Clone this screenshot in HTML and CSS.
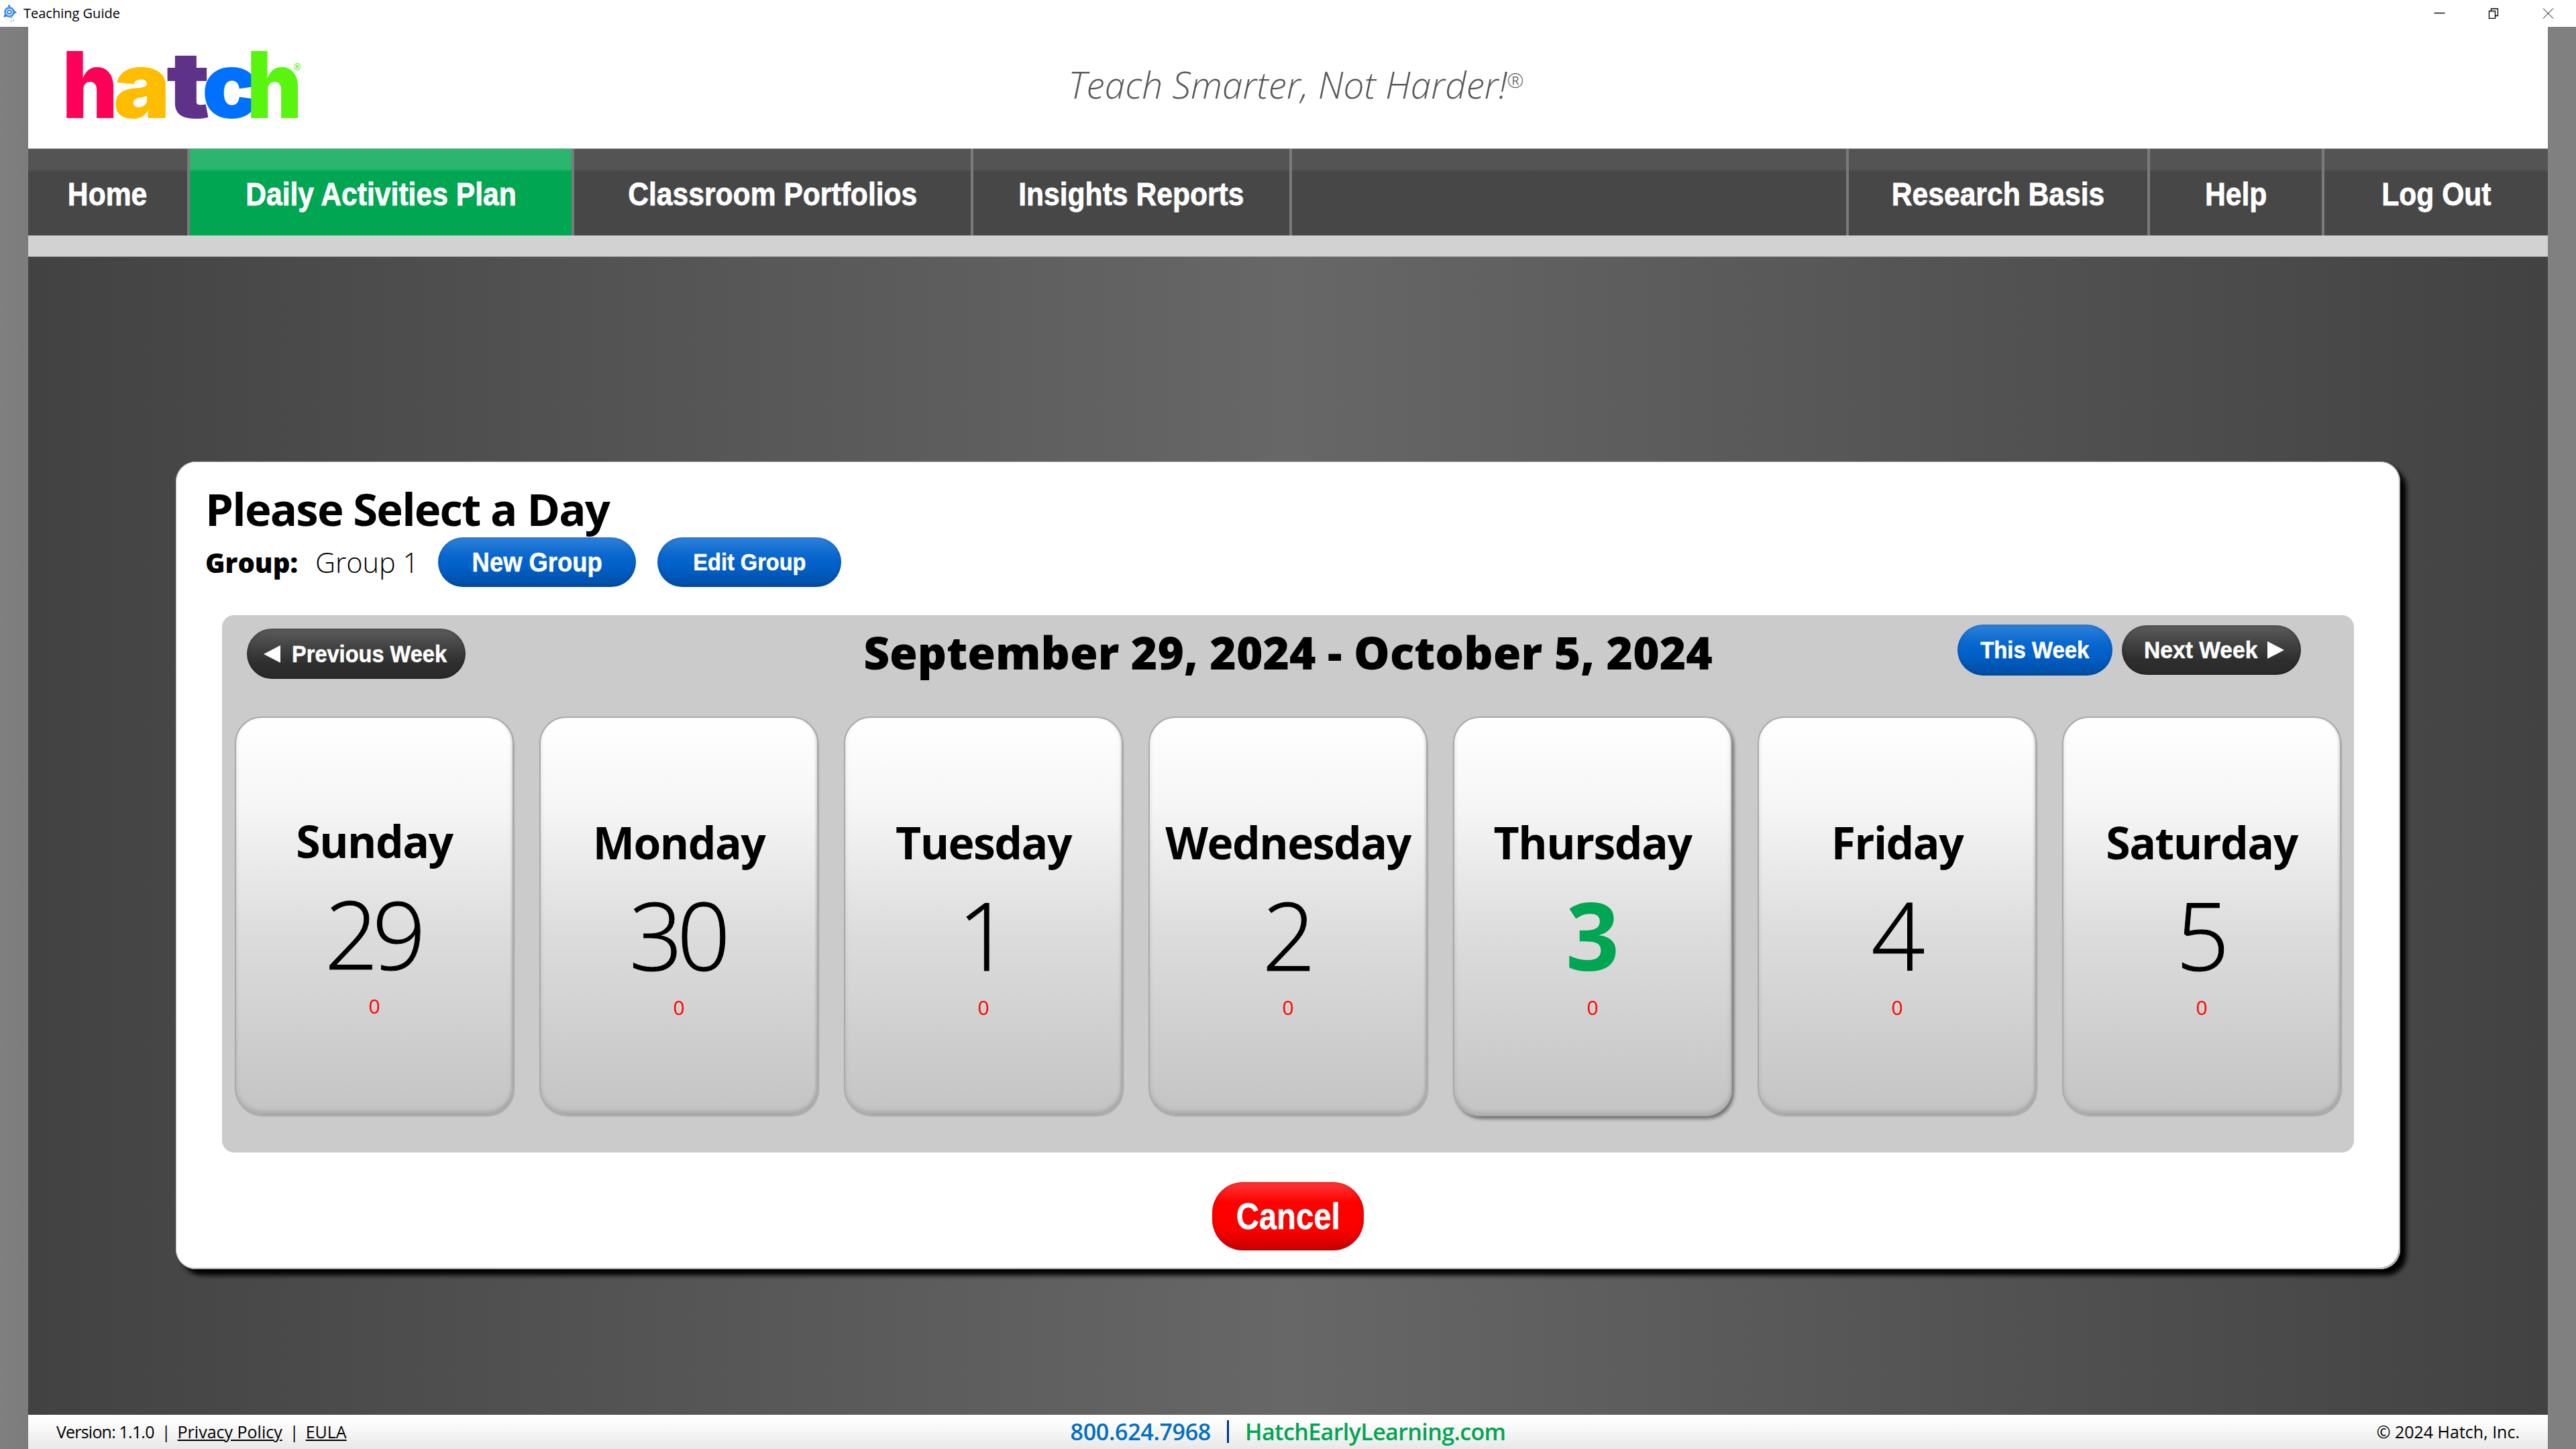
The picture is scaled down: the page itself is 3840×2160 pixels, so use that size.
FILE: index.html
```html
<!DOCTYPE html>
<html lang="en">
<head>
<meta charset="utf-8">
<title>Teaching Guide</title>
<link rel="stylesheet" href="styles.css">
</head>
<body>
<div class="titlebar">
  <svg class="app-icon" viewBox="0 0 24 28" width="24" height="28">
    <path d="M9 3l1.500 3" stroke="#2a7de1" stroke-width="1.200"/>
    <circle cx="8.500" cy="2.500" r="1.500" fill="#2a7de1"/>
    <path d="M2.500 14l-2.500 6 5-1.500zM16 9l4 4-3.500 1.500z" fill="#2a7de1"/>
    <circle cx="9" cy="12" r="6.500" fill="#e3effd" stroke="#2f8bf0" stroke-width="2.600"/>
    <circle cx="9" cy="12" r="2.800" fill="#fff" stroke="#1c6fd0" stroke-width="1.600"/>
    <path d="M9.500 20l3 1 1 -2M11 24l1.500 3M14.500 23l1 3" stroke="#8db8ec" stroke-width="1.300" fill="none"/>
  </svg>
  <span class="app-title">Teaching Guide</span>
  <div class="window-controls">
    <svg viewBox="0 0 17 16" width="17" height="16"><path d="M0.500 7.500h16" stroke="#000" stroke-width="1.400" fill="none"/></svg>
    <svg viewBox="0 0 17 16" width="17" height="16"><path d="M1.500 4.500h9v11h-9zM4.500 4.500v-3.500h10v10.500h-4" stroke="#000" stroke-width="1.300" fill="none"/></svg>
    <svg viewBox="0 0 17 16" width="17" height="16"><path d="M1 0.500l15 15M16 0.500l-15 15" stroke="#000" stroke-width="1" fill="none"/></svg>
  </div>
</div>
<div class="frame">
  <div class="app">
    <header class="header">
      <svg class="logo" viewBox="0 0 420 181" width="420" height="181" role="img" aria-label="hatch">
        <g class="logo-letters">
          <text transform="translate(51 136) scale(.92 1)" fill="#ff0059">h</text>
          <text transform="translate(127 136) scale(1.03 1)" fill="#ffbd00">a</text>
          <text transform="translate(206 136) scale(1.18 1)" fill="#5f3289">t</text>
          <text transform="translate(259 136) scale(1.03 1)" fill="#0070ff">c</text>
          <text transform="translate(326 136) scale(.92 1)" fill="#5af50f">h</text>
        </g>
        <text class="logo-mark" x="396" y="65" fill="#5af50f">®</text>
      </svg>
      <div class="tagline">Teach Smarter, Not Harder!<sup class="reg">®</sup></div>
    </header>
    <nav class="nav">
      <a class="nav-item"><span class="sq">Home</span></a>
      <a class="nav-item nav-active"><span class="sq">Daily Activities Plan</span></a>
      <a class="nav-item"><span class="sq">Classroom Portfolios</span></a>
      <a class="nav-item"><span class="sq">Insights Reports</span></a>
      <span class="nav-item"></span>
      <a class="nav-item"><span class="sq">Research Basis</span></a>
      <a class="nav-item"><span class="sq">Help</span></a>
      <a class="nav-item nav-last"><span class="sq">Log Out</span></a>
    </nav>
    <div class="subbar"></div>
    <main class="stage">
      <section class="modal">
        <h1 class="modal-title">Please Select a Day</h1>
        <div class="group-row">
          <span class="group-label">Group:</span>
          <span class="group-name">Group 1</span>
          <button class="pill pill-blue pill-new"><span class="sq">New Group</span></button>
          <button class="pill pill-blue pill-edit"><span class="sq">Edit Group</span></button>
        </div>
        <div class="panel">
          <div class="week-row">
            <button class="pill pill-dark pill-prev"><span class="tri tri-left"></span><span class="sq">Previous Week</span></button>
            <h2 class="week-title">September 29, 2024 - October 5, 2024</h2>
            <div class="week-right">
              <button class="pill pill-blue pill-this"><span class="sq">This Week</span></button>
              <button class="pill pill-dark pill-next"><span class="sq">Next Week</span><span class="tri tri-right"></span></button>
            </div>
          </div>
          <div class="days">
            <div class="day day-first"><div class="day-name">Sunday</div><div class="day-num">29</div><div class="day-count">0</div></div>
            <div class="day"><div class="day-name">Monday</div><div class="day-num">30</div><div class="day-count">0</div></div>
            <div class="day"><div class="day-name">Tuesday</div><div class="day-num">1</div><div class="day-count">0</div></div>
            <div class="day"><div class="day-name">Wednesday</div><div class="day-num">2</div><div class="day-count">0</div></div>
            <div class="day day-today"><div class="day-name">Thursday</div><div class="day-num">3</div><div class="day-count">0</div></div>
            <div class="day"><div class="day-name">Friday</div><div class="day-num">4</div><div class="day-count">0</div></div>
            <div class="day"><div class="day-name">Saturday</div><div class="day-num">5</div><div class="day-count">0</div></div>
          </div>
        </div>
        <div class="modal-actions"><button class="pill pill-red"><span class="sq">Cancel</span></button></div>
      </section>
    </main>
    <footer class="footer">
      <div class="foot-left">Version: 1.1.0<span class="foot-sep">|</span><a class="foot-link">Privacy Policy</a><span class="foot-sep">|</span><a class="foot-link">EULA</a></div>
      <div class="foot-center"><span class="phone">800.624.7968</span><span class="bar"></span><span class="site">HatchEarlyLearning.com</span></div>
      <div class="foot-right">© 2024 Hatch, Inc.</div>
    </footer>
  </div>
</div>
</body>
</html>
```

FILE: styles.css
```css
* { box-sizing: border-box; }
html, body { margin: 0; height: 100%; }
body {
  width: 3840px;
  height: 2160px;
  overflow: hidden;
  display: flex;
  flex-direction: column;
  background: #fff;
  font-family: "Open Sans", "Noto Sans", sans-serif;
  color: #000;
}
h1, h2 { margin: 0; }
button { border: 0; padding: 0; margin: 0; cursor: pointer; }

.sq { display: inline-block; white-space: nowrap; -webkit-text-stroke: .5px currentColor; }

.titlebar {
  height: 40px;
  flex: none;
  display: flex;
  align-items: center;
  padding-left: 5px;
}
.app-icon { margin-right: 6px; }
.app-title { font-size: 20px; line-height: 40px; }
.window-controls {
  margin-left: auto;
  padding-right: 33px;
  display: flex;
  gap: 64px;
  align-items: center;
}

.frame {
  flex: 1;
  min-height: 0;
  padding: 0 42px;
  background: linear-gradient(90deg, #808080 0, #7c7c7c 42px, #808080 3798px);
  display: flex;
}
.app {
  flex: 1;
  min-width: 0;
  display: flex;
  flex-direction: column;
}

.header {
  height: 181px;
  flex: none;
  background: #fff;
  display: grid;
  grid-template-columns: 1fr auto 1fr;
  align-items: center;
}
.logo-letters text {
  font-family: Inter, "Open Sans", sans-serif;
  font-weight: 900;
  font-size: 138px;
}
.logo-mark { font-family: "Liberation Sans", sans-serif; font-size: 14px; font-weight: 700; }
.tagline {
  margin: 0 0 10px 24px;
  font-size: 55px;
  font-style: italic;
  font-weight: 300;
  color: #595959;
  white-space: nowrap;
}
.reg { font-size: 30px; vertical-align: 16px; line-height: 0; }

.nav {
  height: 130px;
  flex: none;
  display: grid;
  grid-template-columns: 241px 573px 595px 475px 830px 449px 260px 333px;
  border-top: 1px solid #b4b4b4;
  background: linear-gradient(#545454 0, #545454 30px, #474747 34px);
}
.nav-item {
  display: flex;
  align-items: center;
  justify-content: center;
  border-right: 4px solid #7a7a7a;
  font-family: "Liberation Sans", sans-serif;
  font-weight: 700;
  font-size: 49px;
  color: #fff;
  padding-top: 4px;
}
.nav-item .sq { transform: scaleX(.87); -webkit-text-stroke-width: .8px; }
.nav-active { background: linear-gradient(#2bb56e 0, #2bb56e 30px, #00a651 34px); }
.nav-last { border-right: 0; }

.subbar {
  height: 32px;
  flex: none;
  background: #d2d2d2;
  border-bottom: 1px solid #a0a0a0;
}

.stage {
  flex: 1;
  min-height: 0;
  padding-top: 305px;
  display: flex;
  justify-content: center;
  align-items: flex-start;
  background: linear-gradient(90deg, #424242 0, #676767 50%, #424242 100%);
}

.modal {
  width: 3316px;
  height: 1204px;
  background: #fff;
  border-radius: 30px;
  box-shadow: 9px 9px 7px #000, inset 0 0 0 1px #bbb, inset -2px -2px 1px #aaa;
  display: flex;
  flex-direction: column;
  padding: 36px 0 0 44px;
}
.modal-title {
  font-size: 67px;
  font-weight: 700;
  line-height: 68px;
  letter-spacing: -1.8px;
}
.group-row {
  margin-top: 9px;
  display: flex;
  align-items: center;
  height: 74px;
}
.group-label { width: 164px; font-size: 40px; font-weight: 800; }
.group-name { width: 183px; font-size: 41.500px; font-weight: 300; }

.pill {
  display: inline-flex;
  align-items: center;
  justify-content: center;
  color: #fff;
  font-family: "Liberation Sans", sans-serif;
  font-weight: 700;
  white-space: nowrap;
  border-radius: 38px;
}
.pill-blue {
  background: linear-gradient(#2f82da 0, #0a68cf 35%, #0060c8 60%, #004da3 100%);
  box-shadow: inset 0 0 5px rgba(0, 30, 90, .25);
}
.pill-dark {
  background: linear-gradient(#5c5c5c 0, #404040 40%, #2e2e2e 70%, #2a2a2a 100%);
  box-shadow: inset 0 0 5px rgba(0, 0, 0, .3);
}
.pill-new { width: 295px; height: 74px; font-size: 40px; }
.pill-new .sq { transform: scaleX(.91); }
.pill-edit { width: 274px; height: 74px; font-size: 35px; margin-left: 32px; }
.pill-edit .sq { transform: scaleX(.93); }

.panel {
  margin: 42px 0 0 25px;
  width: 3178px;
  height: 801px;
  background: #cbcbcb;
  border-radius: 18px;
  padding: 0 19px;
  display: flex;
  flex-direction: column;
}
.week-row {
  height: 151px;
  flex: none;
  position: relative;
  display: flex;
  align-items: flex-start;
}
.pill-prev {
  margin: 20px 0 0 18px;
  width: 326px;
  height: 75px;
  font-size: 35px;
  justify-content: flex-start;
  padding-left: 25px;
  gap: 17px;
}
.pill-prev .sq { transform: scaleX(.93); transform-origin: left center; }
.tri { display: inline-block; flex: none; width: 0; height: 0; border-style: solid; }
.tri-left { border-width: 13px 25px 13px 0; border-color: transparent #fff transparent transparent; }
.tri-right { border-width: 13px 0 13px 25px; border-color: transparent transparent transparent #fff; }
.week-title {
  position: absolute;
  left: 0;
  right: 0;
  top: 7px;
  text-align: center;
  font-size: 67.500px;
  font-weight: 800;
  line-height: 96px;
  white-space: nowrap;
  pointer-events: none;
}
.week-right {
  margin-left: auto;
  margin-right: 60px;
  margin-top: 14px;
  display: flex;
  gap: 14px;
  align-items: center;
}
.pill-this { width: 231px; height: 76px; font-size: 35px; }
.pill-this .sq { transform: scaleX(.94); }
.pill-next {
  width: 267px;
  height: 74px;
  font-size: 35px;
  justify-content: flex-start;
  padding-left: 33px;
  gap: 8px;
}
.pill-next .sq { transform: scaleX(.96); transform-origin: left center; }

.days {
  display: grid;
  grid-template-columns: repeat(7, 416px);
  column-gap: 38px;
}
.day {
  height: 594px;
  border-radius: 40px;
  border: 2px solid #a9a9a9;
  background: linear-gradient(#fff 0, #f6f6f6 22%, #dcdcdc 55%, #c4c4c4 100%);
  box-shadow: inset 0 -4px 6px rgba(0, 0, 0, .12), inset -2px 0 3px rgba(0, 0, 0, .08), 1px 2px 2px rgba(0, 0, 0, .18);
  display: flex;
  flex-direction: column;
  align-items: center;
  padding-top: 139px;
}
.day-today {
  height: 596px;
  box-shadow: 3px 4px 5px rgba(0, 0, 0, .45), inset 0 -4px 6px rgba(0, 0, 0, .12);
}
.day-first { padding-top: 137px; }
.day-name {
  font-size: 66px;
  font-weight: 700;
  line-height: 92px;
  letter-spacing: -1.500px;
  white-space: nowrap;
}
.day-num {
  font-size: 140px;
  font-weight: 300;
  -webkit-text-stroke: 1px #000;
  line-height: 140px;
  margin: 22px 0 0 -6px;
  letter-spacing: -9px;
}
.day-today .day-num {
  color: #00a651;
  font-weight: 700;
  -webkit-text-stroke: 0;
  letter-spacing: 0;
  margin-left: 0;
}
.day-count {
  font-size: 30px;
  line-height: 40px;
  color: #f00;
  margin-top: 19px;
}

.modal-actions {
  margin-top: 44px;
  margin-left: -44px;
  display: flex;
  justify-content: center;
}
.pill-red {
  width: 226px;
  height: 102px;
  font-size: 55px;
  border-radius: 46px;
  background: linear-gradient(#ff3a3a 0, #ff0000 30%, #fb0000 70%, #c80000 100%);
  box-shadow: inset 0 0 6px rgba(120, 0, 0, .35);
}
.pill-red .sq { transform: scaleX(.86); }

.footer {
  height: 51px;
  flex: none;
  display: grid;
  grid-template-columns: 1fr auto 1fr;
  align-items: center;
  padding: 0 42px 2px;
  background: linear-gradient(#fff 0, #fcfcfc 25%, #e8e8e8 100%);
  font-size: 25px;
}
.foot-left { letter-spacing: -.8px; }
.foot-sep { margin: 0 11px; }
.foot-link { text-decoration: underline; letter-spacing: 0; }
.foot-center { display: flex; align-items: center; font-size: 34px; font-weight: 600; }
.phone { color: #0070c0; letter-spacing: -.3px; }
.bar { width: 3px; height: 34px; background: #00338d; margin: 0 24px; }
.site { color: #00a651; letter-spacing: -.6px; }
.foot-right { text-align: right; }
```
